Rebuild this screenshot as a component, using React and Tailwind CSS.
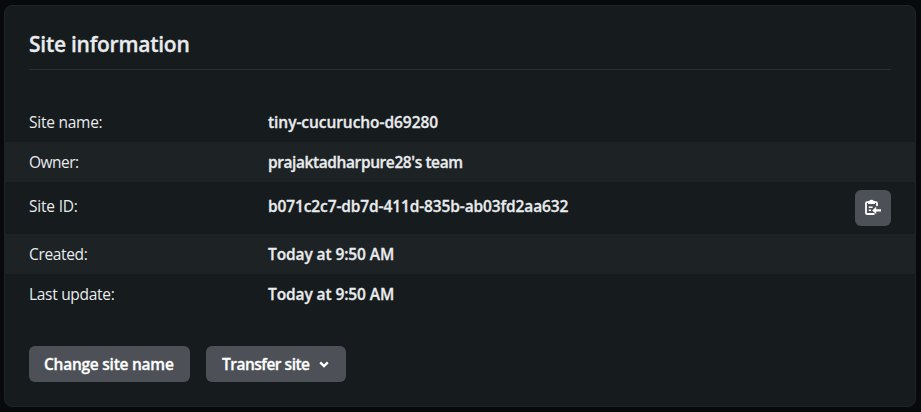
const rows = [
  { label: "Site name:", labelClass: "tracking-[-0.25px]", value: "tiny-cucurucho-d69280", valueClass: "tracking-[-0.05px]" },
  { label: "Owner:", labelClass: "tracking-[-0.5px]", value: "prajaktadharpure28's team", valueClass: "tracking-[-0.41px]", shaded: true },
  { label: "Site ID:", labelClass: "tracking-[-0.2px]", value: "b071c2c7-db7d-411d-835b-ab03fd2aa632", valueClass: "tracking-[-0.12px]", copy: true },
  { label: "Created:", labelClass: "tracking-[-0.35px]", value: "Today at 9:50 AM", valueClass: "tracking-[-0.1px]", shaded: true },
  { label: "Last update:", labelClass: "tracking-[-0.3px]", value: "Today at 9:50 AM", valueClass: "tracking-[-0.1px]" },
];

function ClipboardIcon() {
  return (
    <svg width="18" height="18" viewBox="0 0 18 18" fill="none">
      <path d="M4 3.2H3Q2 3.2 2 4.2V14Q2 15 3 15H10.5M11 3.2H12Q13 3.2 13 4.2V7" stroke="white" strokeWidth="1.8" />
      <path d="M4 2H5.2Q5.8 0.8 7.5 0.8T9.8 2H11V5H4Z" fill="white" />
      <path d="M4.8 8.2H8.6M4.8 11.3H7" stroke="white" strokeWidth="1.5" />
      <path d="M8.2 11.4L12.2 7.8V10.3H17V12.5H12.2V15Z" fill="white" />
    </svg>
  );
}

function Button({ children, className }) {
  return (
    <button className={`flex h-9 items-center rounded-md bg-[#4d5157] pl-[15px] text-[15.5px] font-semibold text-white [-webkit-text-stroke:0.3px] ${className}`}>
      {children}
    </button>
  );
}

export default function App() {
  return (
    <div className="h-[412px] w-[921px] overflow-hidden bg-[#07090c] pt-[5px] pl-1 font-['Open_Sans','Noto_Sans',sans-serif] text-[15.5px] whitespace-nowrap text-[#e9ebed]">
      <section className="h-[402px] w-[912px] rounded-lg border border-[#1e2327] bg-[#161b1e]">
        <header className="mx-6 flex h-16 items-center border-b border-[#2b3034] pt-3.5">
          <h2 className="text-[21px] font-semibold tracking-[-0.25px] [-webkit-text-stroke:0.3px]">Site information</h2>
        </header>
        <dl className="mt-8">
          {rows.map((r) => (
            <div
              key={r.label}
              className={`flex items-center px-6 ${r.copy ? "h-[52px]" : "h-10"} ${r.shaded ? "bg-[#1d2225]" : ""}`}
            >
              <dt className={`w-[239px] ${r.copy ? "pb-0.5" : "pt-0.5"} ${r.labelClass}`}>{r.label}</dt>
              <dd className={`font-semibold [-webkit-text-stroke:0.3px] ${r.copy ? "pb-0.5" : "pt-0.5"} ${r.valueClass}`}>{r.value}</dd>
              {r.copy && (
                <button className="ml-auto flex size-9 items-center justify-center rounded-md bg-[#4d5157]">
                  <ClipboardIcon />
                </button>
              )}
            </div>
          ))}
        </dl>
        <div className="mt-8 ml-6 flex gap-4">
          <Button className="w-[161px] tracking-[-0.25px]">
            <span className="pt-0.5">Change site name</span>
          </Button>
          <Button className="w-[140px] tracking-[-0.5px]">
            <span className="pt-0.5 pl-px">Transfer site</span>
            <svg className="mr-[17px] ml-auto" width="10" height="8" viewBox="0 0 10 8" fill="none">
              <path d="M1.2 2.4L5 6L8.8 2.4" stroke="white" strokeWidth="2.4" />
            </svg>
          </Button>
        </div>
      </section>
    </div>
  );
}
